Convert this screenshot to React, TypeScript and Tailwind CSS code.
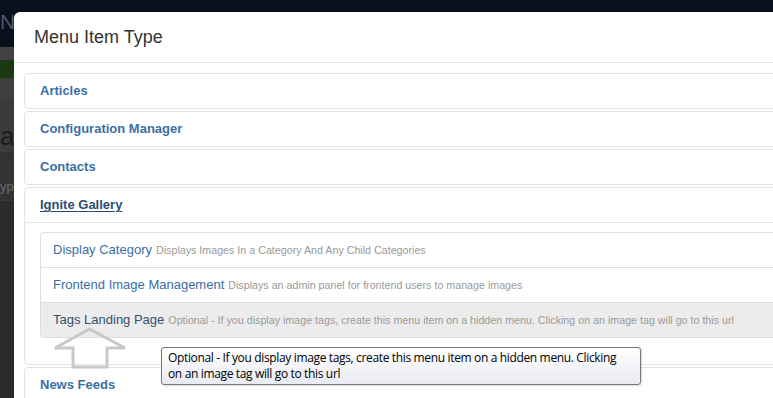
import React from "react";

const sans = { fontFamily: '"Liberation Sans", Arial, sans-serif' };

function Group({ title }: { title: string }) {
  return (
    <div className="mb-[2px] rounded-[4px] border border-[#e3e3e3]">
      <div className="px-[15px] py-[8px] text-[13px] font-bold leading-[18px] text-[#3a6fa6]">{title}</div>
    </div>
  );
}

function Row({ title, desc, active, last }: { title: string; desc: string; active?: boolean; last?: boolean }) {
  return (
    <div
      className={`flex items-baseline whitespace-nowrap px-[12px] py-[8px] leading-[18px] ${last ? "" : "border-b border-[#dddddd]"} ${active ? "bg-[#ececec]" : "bg-white"}`}
    >
      <span className={`text-[13px] ${active ? "text-[#34506f]" : "text-[#3a6fa6]"}`}>{title}</span>
      <span className="ml-[4px] text-[10.7px] text-[#9a9a9a]">{desc}</span>
    </div>
  );
}

export default function App() {
  return (
    <div className="relative h-[398px] w-[773px] overflow-hidden bg-[#2b2b2b]" style={sans}>
      {/* dimmed page behind the modal */}
      <div className="flex flex-col">
        <div className="h-[47px] bg-[#07101d]">
          <div className="w-[14px] overflow-hidden whitespace-nowrap pt-[9px] text-[21px] leading-[26px] text-[#4d5766]">Ne</div>
        </div>
        <div className="h-[13px] bg-[#424242]" />
        <div className="h-[18px] bg-[#1c3913]" />
        <div className="h-[20px] bg-[#3f3f3f]" />
        <div className="h-[55px] border-b border-[#2e2e2e] bg-[#3b3b3b]">
          <div className="w-[14px] overflow-hidden whitespace-nowrap pt-[24px] text-[26px] leading-[28px] text-[#1c1c1c]">ag</div>
        </div>
        <div className="h-[48px] border-b border-[#3a3a3a] bg-[#333333]">
          <div className="w-[14px] overflow-hidden whitespace-nowrap pt-[26px] text-[13px] leading-[16px] text-[#6a6a6a]">yp</div>
        </div>
      </div>

      {/* modal */}
      <div className="absolute left-[14px] top-[12px] h-[400px] w-[800px] rounded-tl-[6px] bg-white">
        <div className="h-[51px] border-b border-[#e5e5e5] pl-[20px] pt-[13px] text-[18px] leading-[24px] text-[#333333]">Menu Item Type</div>
        <div className="pl-[10px] pt-[10px]">
          <Group title="Articles" />
          <Group title="Configuration Manager" />
          <Group title="Contacts" />
          <div className="mb-[2px] rounded-[4px] border border-[#e3e3e3]">
            <div className="border-b border-[#e5e5e5] px-[15px] py-[8px] text-[13px] font-bold leading-[18px] text-[#2b4e75] underline underline-offset-2">
              Ignite Gallery
            </div>
            <div className="pb-[26px] pl-[15px] pt-[9px]">
              <div className="overflow-hidden rounded-l-[4px] border border-r-0 border-[#dddddd]">
                <Row title="Display Category" desc="Displays Images In a Category And Any Child Categories" />
                <Row title="Frontend Image Management" desc="Displays an admin panel for frontend users to manage images" />
                <Row
                  title="Tags Landing Page"
                  desc="Optional - If you display image tags, create this menu item on a hidden menu. Clicking on an image tag will go to this url"
                  active
                  last
                />
              </div>
            </div>
          </div>
          <Group title="News Feeds" />
        </div>
      </div>

      {/* annotation arrow */}
      <svg className="absolute left-0 top-0" width="200" height="398" viewBox="0 0 200 398">
        <polygon
          points="89.5,329 55,348 73,348 73,367 107,367 107,348 125,348"
          fill="none"
          stroke="#c8c8c8"
          strokeWidth="3"
          strokeLinejoin="miter"
        />
      </svg>

      {/* tooltip */}
      <div
        className="absolute left-[161px] top-[347px] h-[38px] w-[480px] rounded-[3px] border border-[#767676] bg-gradient-to-b from-white to-[#e9eaf2] px-[6px] pt-[2px] text-[12px] leading-[16px] tracking-[-0.35px] text-black shadow-[1px_1px_2px_rgba(0,0,0,0.15)]"
        style={{ fontFamily: '"Open Sans", "Noto Sans", sans-serif' }}
      >
        Optional - If you display image tags, create this menu item on a hidden menu. Clicking
        <br />
        on an image tag will go to this url
      </div>
    </div>
  );
}
